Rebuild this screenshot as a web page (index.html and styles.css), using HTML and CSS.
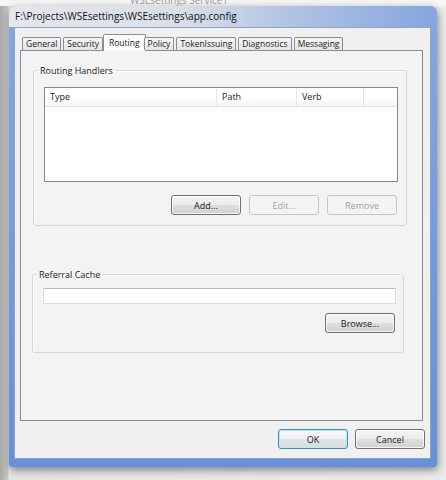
FILE: index.html
```html
<!DOCTYPE html>
<html lang="en">
<head>
    <meta charset="UTF-8">
    <meta name="viewport" content="width=device-width, initial-scale=1.0">
    <title>app.config</title>
    <link rel="stylesheet" href="styles.css">
</head>
<body>
    <div class="backdrop-strip"><span>WSEsettings Service1</span></div>

    <div class="window">
        <div class="titlebar">F:\Projects\WSEsettings\WSEsettings\app.config</div>

        <div class="client">
            <ul class="tabs">
                <li class="tab">General</li>
                <li class="tab">Security</li>
                <li class="tab tab-selected">Routing</li>
                <li class="tab">Policy</li>
                <li class="tab">TokenIssuing</li>
                <li class="tab">Diagnostics</li>
                <li class="tab">Messaging</li>
            </ul>

            <div class="tab-page">
                <fieldset class="group group-handlers">
                    <legend>Routing Handlers</legend>
                    <div class="listview">
                        <div class="lv-header">
                            <span class="lv-col col-type">Type</span>
                            <span class="lv-col col-path">Path</span>
                            <span class="lv-col col-verb">Verb</span>
                            <span class="lv-col col-rest"></span>
                        </div>
                    </div>
                    <div class="button-row">
                        <button class="btn">Add...</button>
                        <button class="btn" disabled>Edit...</button>
                        <button class="btn" disabled>Remove</button>
                    </div>
                </fieldset>

                <fieldset class="group group-cache">
                    <legend>Referral Cache</legend>
                    <input class="textbox" type="text">
                    <div class="button-row">
                        <button class="btn">Browse...</button>
                    </div>
                </fieldset>
            </div>

            <div class="dialog-buttons">
                <button class="btn btn-default">OK</button>
                <button class="btn">Cancel</button>
            </div>
        </div>
    </div>
</body>
</html>
```

FILE: styles.css
```css
* {
    box-sizing: border-box;
}
body {
    margin: 0;
    height: 480px;
    overflow: hidden;
    font-family: "Segoe UI", "Open Sans", "Noto Sans", sans-serif;
    font-size: 9px;
    color: #1b1b1b;
    background: linear-gradient(to right, #a8a8a8 0, #c9c9c9 8px, #e6e6e6 9px, #ececec 100%);
}
.backdrop-strip {
    height: 6px;
    overflow: hidden;
    padding-left: 130px;
    background: #f6f6f6;
    color: #9a9a9a;
}
.backdrop-strip span {
    display: block;
    margin-top: -6px;
    line-height: 12px;
    font-size: 10px;
}
.window {
    display: flex;
    flex-direction: column;
    width: 428px;
    height: 461px;
    margin-left: 9px;
    padding: 0 6px 8px 5px;
    background: linear-gradient(to bottom, #86a6df, #6690da);
    border-radius: 7px 7px 3px 3px;
    box-shadow: 1px 3px 9px rgba(0, 0, 0, 0.45);
}
.titlebar {
    height: 21px;
    margin: 0 -6px 0 -5px;
    padding-left: 6px;
    line-height: 21px;
    font-size: 10px;
    color: #111;
    border-radius: 7px 7px 0 0;
    background: linear-gradient(to right, #e4e7eb 0%, #d9dfe8 40%, #aabfe3 70%, #86a5de 100%);
}
.client {
    flex: 1;
    display: flex;
    flex-direction: column;
    background: #f0f0f0;
    border: 1px solid #8ea3c6;
}
.tabs {
    display: flex;
    align-items: flex-end;
    height: 16px;
    margin: 6px 0 0 7px;
    padding: 0;
    list-style: none;
    position: relative;
    z-index: 1;
    font-size: 8.5px;
}
.tab {
    height: 13px;
    line-height: 12px;
    padding: 0 3px;
    margin-right: 2px;
    border: 1px solid #898c95;
    border-bottom: none;
    border-radius: 2px 2px 0 0;
    background: linear-gradient(to bottom, #f6f6f6, #e4e4e4);
}
.tab-selected {
    height: 17px;
    line-height: 15px;
    margin: 0 0 -1px -2px;
    padding: 0 5px;
    background: #fbfbfb;
}
.tab-selected + .tab {
    margin-left: -2px;
}
.tab-page {
    height: 371px;
    margin: 0 7px 0 5px;
    border: 1px solid #898c95;
    background: #f3f3f3;
}
.group {
    margin: 0;
    border: 1px solid #d6d6d6;
    border-radius: 3px;
    box-shadow: inset 1px 1px 0 #fff;
}
.group legend {
    padding: 0 2px;
    margin-left: -6px;
    line-height: 13px;
}
.group-handlers {
    margin: 13px 15px 0 12px;
    padding: 10px 8px 10px 10px;
}
.group-cache {
    margin: 42px 18px 0 11px;
    padding: 7px 7px 19px 10px;
}
.listview {
    height: 95px;
    border: 1px solid #828790;
    background: #fff;
}
.lv-header {
    display: flex;
    height: 19px;
    border-bottom: 1px solid #dfe1e4;
    background: linear-gradient(to bottom, #ffffff 0%, #ffffff 55%, #f3f4f6 100%);
}
.lv-col {
    line-height: 18px;
    padding-left: 5px;
    border-right: 1px solid #e4e5e7;
}
.col-type {
    width: 172px;
}
.col-path {
    width: 80px;
}
.col-verb {
    width: 67px;
}
.col-rest {
    flex: 1;
    border-right: none;
}
.button-row {
    display: flex;
    justify-content: flex-end;
    gap: 8px;
    padding-right: 1px;
}
.group-handlers .button-row {
    margin-top: 13px;
}
.group-cache .button-row {
    margin-top: 9px;
}
.btn {
    width: 70px;
    height: 20px;
    padding: 0;
    font: inherit;
    color: #1b1b1b;
    border: 1px solid #707070;
    border-radius: 3px;
    background: linear-gradient(to bottom, #f4f4f4 0%, #ececec 50%, #dedede 50%, #d2d2d2 100%);
    box-shadow: inset 0 0 0 1px rgba(255, 255, 255, 0.75);
}
.btn:disabled {
    color: #a2a2a2;
    border-color: #c3c6c9;
    background: #f4f4f4;
    box-shadow: none;
}
.btn-default {
    border-color: #3f8db5;
    box-shadow: inset 0 0 0 1px #bfe6f5;
    background: linear-gradient(to bottom, #f6f8f9 0%, #eef0f1 50%, #e1e4e6 50%, #d8dcdf 100%);
}
.textbox {
    display: block;
    width: 100%;
    height: 16px;
    margin: 0;
    border: 1px solid #dadde2;
    border-top-color: #b9bcc2;
    background: #fff;
}
.dialog-buttons {
    display: flex;
    justify-content: flex-end;
    gap: 7px;
    margin: 8px 5px 0 0;
}
```
